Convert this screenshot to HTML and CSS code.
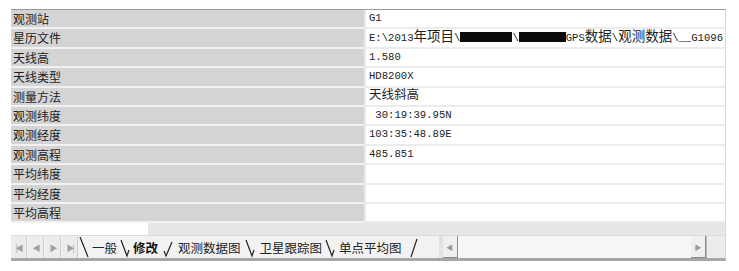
FILE: index.html
```html
<!DOCTYPE html>
<html lang="zh-CN">
<head>
  <meta charset="UTF-8" />
  <title>观测站属性</title>
  <link rel="stylesheet" href="styles.css">
</head>
<body>
  <div class="frame">
    <!-- Property grid -->
    <div class="grid">
      <div class="label">观测站</div><div class="value">G1</div>
      <div class="label">星历文件</div>
      <div class="value">E:\2013<span class="cjk">年项目</span>\<span class="redact r1"></span>\<span class="redact r2"></span>GPS<span class="cjk">数据</span>\<span class="cjk">观测数据</span>\__G1096</div>
      <div class="label">天线高</div><div class="value">1.580</div>
      <div class="label">天线类型</div><div class="value">HD8200X</div>
      <div class="label">测量方法</div><div class="value"><span class="cjk big">天线斜高</span></div>
      <div class="label">观测纬度</div><div class="value">&nbsp;30:19:39.95N</div>
      <div class="label">观测经度</div><div class="value">103:35:48.89E</div>
      <div class="label">观测高程</div><div class="value">485.851</div>
      <div class="label">平均纬度</div><div class="value"></div>
      <div class="label">平均经度</div><div class="value"></div>
      <div class="label">平均高程</div><div class="value"></div>
    </div>

    <div class="gap-row">
      <div class="gap-white"></div>
      <div class="gap-gray"></div>
    </div>

    <!-- Sheet tabs and scrollbar -->
    <div class="tabbar">
      <div class="nav">
        <span class="nav-btn">|◀</span>
        <span class="nav-btn">◀</span>
        <span class="nav-btn">▶</span>
        <span class="nav-btn">▶|</span>
      </div>
      <div class="tabs">
        <svg class="edge" width="10" height="22" viewBox="0 0 10 22"><path d="M1 1 L9 21" stroke="#222" stroke-width="1.2" fill="none"/></svg>
        <span class="tab">一般</span>
        <svg class="edge" width="10" height="22" viewBox="0 0 10 22"><path d="M1 4 L7 20 L9 14" stroke="#222" stroke-width="1.2" fill="none"/></svg>
        <span class="tab active">修改</span>
        <svg class="edge wide" width="14" height="22" viewBox="0 0 14 22"><path d="M11 6 L5 20 L3 15" stroke="#222" stroke-width="1.2" fill="none"/></svg>
        <span class="tab">观测数据图</span>
        <svg class="edge" width="13" height="22" viewBox="0 0 13 22"><path d="M2 4 L8 20 L10 14" stroke="#222" stroke-width="1.2" fill="none"/></svg>
        <span class="tab">卫星跟踪图</span>
        <svg class="edge" width="11" height="22" viewBox="0 0 11 22"><path d="M1 4 L7 20 L9 14" stroke="#222" stroke-width="1.2" fill="none"/></svg>
        <span class="tab">单点平均图</span>
        <svg class="edge" width="14" height="22" viewBox="0 0 14 22"><path d="M12 3 L6 21" stroke="#222" stroke-width="1.2" fill="none"/></svg>
      </div>
      <div class="hscroll">
        <span class="sb-btn">◀</span>
        <span class="sb-track"></span>
        <span class="sb-btn">▶</span>
      </div>
      <div class="corner"></div>
    </div>
  </div>
</body>
</html>
```

FILE: styles.css
```css
body {
  margin: 0;
  background: #fff;
  font-family: "Noto Sans CJK SC", "DejaVu Sans", sans-serif;
  color: #1a1a1a;
}

/* Outer frame */
.frame {
  margin: 9px 0 0 11px;
  width: 714px;
  border-top: 1px solid #9a9a9a;
  border-right: 1px solid #d8d8d8;
  border-bottom: 3px solid #a6a6a6;
}

/* Property grid */
.grid {
  display: grid;
  grid-template-columns: 353px 1fr;
}

.label {
  height: 17.4px;
  line-height: 17.4px;
  padding-left: 2px;
  background: #d4d4d4;
  border-bottom: 2px solid #f1f1f1;
  font-size: 12px;
  color: #1e1e1e;
}

.value {
  height: 17.4px;
  line-height: 17.4px;
  padding-left: 3px;
  background: #fff;
  border-left: 2px solid #eaeaea;
  border-bottom: 2px solid #ececec;
  font-family: "Liberation Mono", monospace;
  font-size: 10.6px;
  color: #222;
  white-space: nowrap;
}

.cjk {
  font-family: "Noto Sans CJK SC", sans-serif;
  font-size: 13.5px;
  line-height: 1;
}

.cjk.big {
  font-size: 12.5px;
}

.redact {
  display: inline-block;
  height: 10px;
  background: #0c0c0c;
  vertical-align: -1px;
}

.r1 { width: 52px; }
.r2 { width: 47px; }

/* Space between grid and tabs */
.gap-row {
  display: flex;
  height: 12px;
}

.gap-white {
  width: 137px;
  background: #fff;
}

.gap-gray {
  flex: 1;
  background: #e6e6e6;
}

/* Tab bar */
.tabbar {
  display: flex;
  align-items: stretch;
  height: 22px;
  background: #f2f2f2;
  border-top: 1px solid #dcdcdc;
}

.nav {
  display: flex;
  flex: none;
}

.nav-btn {
  flex: none;
  width: 16px;
  min-width: 0;
  overflow: hidden;
  margin-right: 1px;
  display: flex;
  align-items: center;
  justify-content: center;
  font-size: 8px;
  color: #a0a0a0;
  background: #ececec;
  border-right: 1px solid #d0d0d0;
  letter-spacing: -2px;
  box-sizing: border-box;
}

.tabs {
  display: flex;
  align-items: center;
}

.edge {
  display: block;
  flex: none;
}

.tab {
  font-size: 12.5px;
  padding: 0 3px;
  color: #222;
  white-space: nowrap;
}

.tab.active {
  font-weight: bold;
  color: #111;
}

.hscroll {
  display: flex;
  align-items: stretch;
  margin-left: 20px;
  flex: 1;
  background: #f6f6f6;
  border-left: 4px solid #e2e2e2;
}

.sb-btn {
  width: 14px;
  display: flex;
  align-items: center;
  justify-content: center;
  font-size: 7px;
  color: #999;
  background: #efefef;
  border-right: 1px solid #8a8a8a;
  border-bottom: 1px solid #8a8a8a;
}

.sb-track {
  flex: 1;
}

.corner {
  width: 18px;
  background: #ececec;
  border-left: 1px solid #bdbdbd;
}
```
